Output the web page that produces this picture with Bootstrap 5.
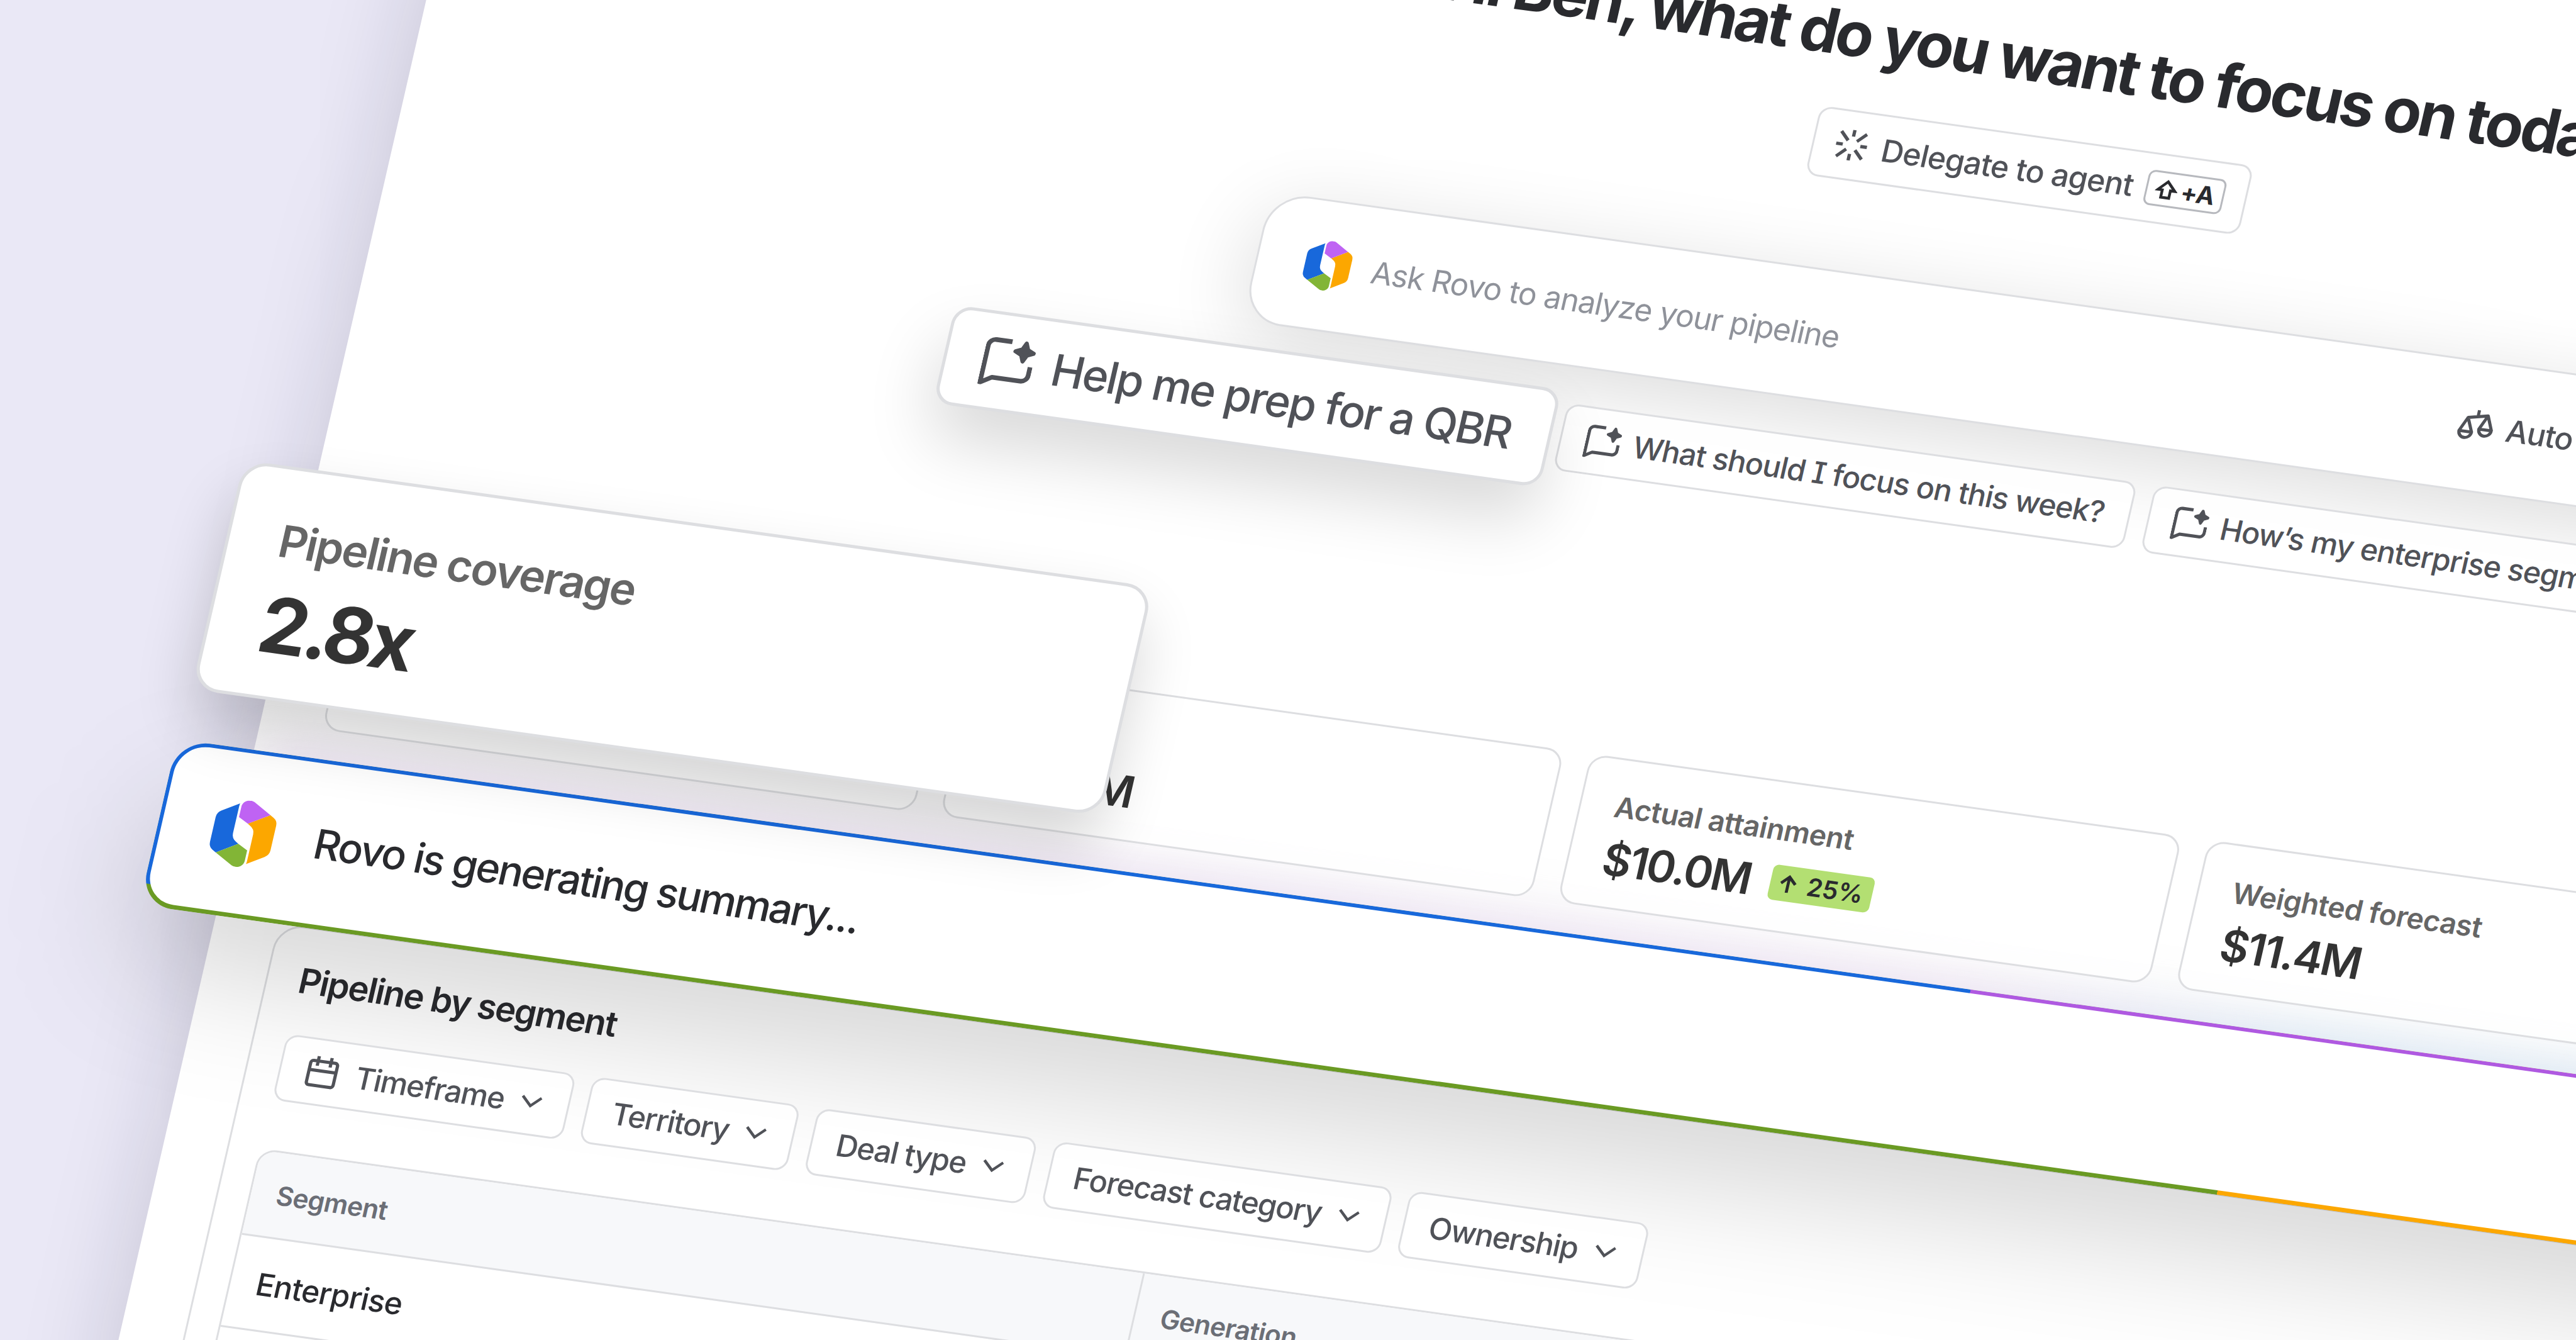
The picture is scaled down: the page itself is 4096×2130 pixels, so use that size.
<!DOCTYPE html>
<html lang="en">

<head>
  <meta charset="UTF-8" />
  <title>Pipeline overview</title>
  <meta name="viewport" content="width=device-width, initial-scale=1" />
  <link href="https://cdn.jsdelivr.net/npm/bootstrap@5.3.0/dist/css/bootstrap.min.css" rel="stylesheet" />
  <style>
    body {
      font-family: Inter, "Liberation Sans", sans-serif;
      font-feature-settings: "cv08";
      line-height: normal;
      color: #292a2e;
      background-color: #eae8f6;
      white-space: nowrap;
    }

    .stage {
      width: 4096px;
      height: 2130px;
      background-color: #eae8f6;
    }

    /* everything inside lives on one tilted sheet */
    .scene {
      display: flow-root;
      width: 6000px;
      height: 3000px;
      transform-origin: 0 0;
      transform: matrix(.9904, .1382, -.2239, .9746, 0, 0);
    }

    .sheet {
      width: 5110px;
      height: 3100px;
      margin: -700px 0 0 663px;
      padding: 284px 100px 0;
      background-color: #fff;
      box-shadow: 0 0 150px rgba(20, 15, 50, .17);
    }

    .greeting {
      font-size: 98.6px;
      font-weight: 650;
      line-height: 120px;
      letter-spacing: -.0422em;
      margin: 0 0 61px;
      padding-right: 12px;
    }

    /* outlined pills */
    .pill {
      display: flex;
      align-items: center;
      flex: none;
      position: relative;
      z-index: 2;
      border: 3.5px solid #dddee1;
      border-radius: 20px;
      background-color: rgba(255, 255, 255, .86);
      color: #505258;
      font-weight: 500;
    }

    .pill-delegate {
      height: 113px;
      padding: 0 33px 0 31px;
      gap: 20.5px;
      font-size: 49.5px;
      letter-spacing: -.82px;
    }

    .shortcut {
      height: 56.5px;
      width: 125px;
      border: 3.5px solid #b7b9be;
      border-radius: 11px;
      gap: 5px;
      font-size: 39.5px;
      font-weight: 700;
      letter-spacing: -.6px;
      color: #292a2e;
    }

    .pill-prompt {
      height: 109px;
      padding: 0 39px 0 38px;
      gap: 21px;
      font-size: 48px;
      letter-spacing: -1.04px;
    }

    .pill-hero {
      height: 160px;
      top: 6px;
      padding: 0 59px 0 57.5px;
      margin: -26px -13.5px -26px -2px;
      gap: 31px;
      border-width: 5px;
      border-radius: 30px;
      background-color: #fff;
      font-size: 70.4px;
      letter-spacing: -2.33px;
      z-index: 3;
      box-shadow: 0 55px 105px rgba(0, 0, 0, .15);
    }

    .pill-filter {
      height: 108px;
      padding: 0 41px 0 38.5px;
      gap: 26px;
      font-size: 48.5px;
      letter-spacing: -1.4px;
    }

    .ask-box {
      width: 2344px;
      height: 211.5px;
      margin-top: 143.5px;
      padding-left: 70.5px;
      gap: 31px;
      border: 3.5px solid #dddee1;
      border-radius: 63px;
      background-color: #fff;
      font-size: 49.3px;
      letter-spacing: -1.01px;
      color: #8f929a;
      position: relative;
      z-index: 1;
      box-shadow: 0 30px 130px rgba(0, 0, 0, .14);
    }

    .model-pick {
      width: 411.5px;
      gap: 21px;
      color: #505258;
      font-weight: 500;
    }

    .prompt-row {
      margin-top: 57.5px;
      padding-left: 833.5px;
      gap: 28px;
    }

    .metric-row {
      margin: 440.5px 0 0 -2px;
      gap: 42px;
    }

    .metric {
      flex: none;
      width: 949.5px;
      height: 242px;
      padding: 44.8px 0 0 53.6px;
      border: 3.5px solid #dddee1;
      border-radius: 28px;
      background-color: rgba(255, 255, 255, .75);
      position: relative;
      z-index: 2;
    }

    .metric-label {
      font-size: 46px;
      font-weight: 600;
      line-height: 60px;
      letter-spacing: -.5px;
      color: #666;
    }

    .metric-value {
      margin-top: 12px;
      font-size: 70.4px;
      font-weight: 600;
      line-height: 86px;
      letter-spacing: -2.6px;
      color: #333;
    }

    .delta {
      width: 163px;
      height: 57px;
      margin-left: 32px;
      gap: 16px;
      border-radius: 9px;
      background-color: #b3df72;
      color: #292a2e;
      font-size: 40px;
      letter-spacing: -.2px;
    }

    .coverage {
      position: absolute;
      left: -119px;
      top: 1373px;
      z-index: 5;
      width: 1459.5px;
      height: 374px;
      padding: 72px 0 0 79px;
      border: 5px solid #dddee1;
      border-radius: 42px;
      background-color: #fff;
      box-shadow: 0 50px 95px rgba(0, 0, 0, .165);
    }

    .coverage .metric-label {
      font-size: 70.7px;
      line-height: 86px;
      letter-spacing: -2.25px;
    }

    .coverage .metric-value {
      margin-top: 16px;
      font-size: 124px;
      font-weight: 700;
      line-height: 150px;
      letter-spacing: -6.6px;
    }

    /* summary bar with the four colour outline */
    .summary {
      position: absolute;
      left: -123.2px;
      top: 1828.5px;
      z-index: 1;
      width: 5356px;
      height: 270px;
    }

    .summary-shade {
      position: absolute;
      left: 0;
      top: 90px;
      width: 5000px;
      height: 100%;
      border-radius: 56px;
      background-color: rgba(0, 0, 0, .16);
      filter: blur(100px);
    }

    .summary-glow {
      position: absolute;
      left: 150px;
      right: 0;
      top: -8px;
      height: 150px;
      background: linear-gradient(90deg, #ebe0f2 0, #ebe0f2 2700px, #d8e6f4 3250px);
      filter: blur(38px);
    }

    .summary-frame {
      position: relative;
      height: 100%;
      padding: 6.3px;
      border-radius: 53px;
      background:
        linear-gradient(90deg, #1868db 2879px, #af59e1 2879px) 0 0 / 100% 235px no-repeat,
        linear-gradient(90deg, #6a9a23 3335px, #fca700 3335px);
    }

    .summary-body {
      height: 100%;
      padding-left: 75.5px;
      gap: 61px;
      border-radius: 47px;
      background-color: #fff;
      font-size: 65.5px;
      font-weight: 500;
      letter-spacing: -2.53px;
    }

    .segment-panel {
      height: 1200px;
      margin-top: 315px;
      padding: 49px 49.5px 0;
      border: 3.5px solid #dddee1;
      border-radius: 42px;
    }

    .panel-title {
      margin: 0 0 53px;
      font-size: 55.5px;
      font-weight: 600;
      line-height: 68px;
      letter-spacing: -1.73px;
    }

    .filter-row {
      gap: 27.5px;
    }

    .seg-table {
      display: grid;
      grid-template-columns: 1416px 1fr;
      margin: 79px 0 0 -2px;
      border: 3.5px solid #dddee1;
      border-radius: 28px;
      overflow: hidden;
      position: relative;
      z-index: 2;
      background-color: #fff;
    }

    .seg-table > div {
      display: flex;
      align-items: center;
      height: 150px;
      padding-left: 41px;
      border-bottom: 3.5px solid #dddee1;
      font-size: 49.3px;
      font-weight: 500;
      letter-spacing: -.82px;
    }

    .seg-table > .seg-head {
      height: 138px;
      background-color: #f7f8fa;
      color: #6b6e76;
      font-size: 42.2px;
      font-weight: 600;
      letter-spacing: -.7px;
    }

    .seg-table > .seg-split {
      padding-left: 41px;
      border-left: 3.5px solid #dddee1;
    }

    .ico {
      flex: none;
      fill: none;
      stroke: currentColor;
      stroke-width: 1.5;
    }
  </style>
</head>

<body>
  <svg width="0" height="0" class="position-absolute">
    <symbol id="rovo" viewBox="40.6 10.1 108 108">
      <path fill="#1868db" stroke="none" d="M79.3 16.8 52.9 32.1Q46 36.1 46 43.8V84.2Q46 92 52.8 96.1L58.7 99.6 90.8 81 86.7 78.5Q78.7 74 78.7 65.3V22.1Q78.7 19 79.3 16.8Z" />
      <path fill="#82b536" stroke="none" d="M58.7 99.6 88 116.6C96.5 121 106.9 115.5 106.9 106.6V89.6L90.8 81Z" />
      <path fill="#fca700" stroke="none" d="M109.9 111.4 136.3 96.1Q143.2 92.1 143.2 84.4V44Q143.2 36.2 136.4 32.1L130.5 28.6 98.4 47.2 102.5 49.7Q110.5 54.2 110.5 62.9V106.1Q110.5 109.2 109.9 111.4Z" />
      <path fill="#bf63f3" stroke="none" d="M130.5 28.6 101.2 11.6C92.7 7.2 82.3 12.7 82.3 21.6V38.6L98.4 47.2Z" />
    </symbol>
    <symbol id="chat" viewBox="0 0 16 16">
      <path stroke-linejoin="round" d="M8 1.15H2.9A2.15 2.15 0 0 0 .75 3.3V15.25L4.1 13.2H13.1A2.15 2.15 0 0 0 15.25 11.05V8.4" />
      <path fill="currentColor" stroke-width="1.3" stroke-linejoin="round" d="M12.5 1.1 13.4 3.1 15.4 4 13.4 4.9 12.5 6.9 11.6 4.9 9.6 4 11.6 3.1Z" />
    </symbol>
    <symbol id="down" viewBox="0 0 34 20">
      <path stroke-width="4.4" d="M2 2.2 17 16.6 32 2.2" />
    </symbol>
  </svg>

  <div class="stage position-relative overflow-hidden">
    <div class="scene">
      <div class="sheet position-relative">
        <h1 class="greeting text-center">Hi Ben, what do you want to focus on today?</h1>

        <div class="d-flex justify-content-center">
          <div class="pill pill-delegate">
            <svg class="ico" width="56.3" height="56.3" viewBox="0 0 16 16">
              <path d="M8 1v3M8 12v3M1 8h3M12 8h3M2.2 2.2 6 6M10 10l3.8 3.8M13.8 2.2 10 6M6 10l-3.8 3.8" />
            </svg>
            <span>Delegate to agent</span>
            <span class="shortcut d-flex align-items-center justify-content-center">
              <svg class="ico" width="36" height="32" viewBox="0 0 36 32">
                <path stroke-width="4.4" d="M18 3 31.5 17H24.5V29H11.5V17H4.5Z" />
              </svg>
              <span>+A</span>
            </span>
          </div>
        </div>

        <div class="ask-box d-flex align-items-center mx-auto">
          <svg class="ico" width="80.5" height="80.5"><use href="#rovo" /></svg>
          <span>Ask Rovo to analyze your pipeline</span>
          <div class="model-pick d-flex align-items-center ms-auto">
            <svg class="ico" width="56.3" height="56.3" viewBox="0 0 16 16">
              <path stroke-width="1.4" stroke-linejoin="round" d="M7.9.7V3.7M6.55 11 3.6 4.6 12.3 2.7 15.2 9.2M3.6 4.6.85 11H6.55A2.85 2.85 0 0 1 .85 11M12.3 2.7 9.5 9.2H15.2A2.85 2.85 0 0 1 9.5 9.2" />
            </svg>
            <span>Auto</span>
          </div>
        </div>

        <div class="prompt-row d-flex align-items-center">
          <div class="pill pill-prompt pill-hero">
            <svg class="ico" width="80.5" height="80.5"><use href="#chat" /></svg>
            <span>Help me prep for a QBR</span>
          </div>
          <div class="pill pill-prompt">
            <svg class="ico" width="55" height="55"><use href="#chat" /></svg>
            <span>What should I focus on this week?</span>
          </div>
          <div class="pill pill-prompt">
            <svg class="ico" width="55" height="55"><use href="#chat" /></svg>
            <span>How’s my enterprise segment doing?</span>
          </div>
        </div>

        <div class="metric-row d-flex">
          <div class="metric"></div>
          <div class="metric">
            <div class="metric-value mt-0 pt-5">
              <div class="pt-4">$10.0M</div>
            </div>
          </div>
          <div class="metric">
            <div class="metric-label">Actual attainment</div>
            <div class="metric-value d-flex align-items-center">
              <span>$10.0M</span>
              <span class="delta d-flex align-items-center justify-content-center">
                <svg class="ico" width="29" height="29" viewBox="0 0 28 28">
                  <path stroke-width="4.6" d="M14 28V4M3 14 14 3.2 25 14" />
                </svg>
                <span>25%</span>
              </span>
            </div>
          </div>
          <div class="metric">
            <div class="metric-label">Weighted forecast</div>
            <div class="metric-value">$11.4M</div>
          </div>
          <div class="metric"></div>
        </div>

        <div class="segment-panel">
          <h2 class="panel-title">Pipeline by segment</h2>
          <div class="filter-row d-flex">
            <div class="pill pill-filter">
              <svg class="ico" width="55" height="55" viewBox="0 0 16 16">
                <path stroke-linejoin="round" d="M3 2.75H13A1.25 1.25 0 0 1 14.25 4V13A1.25 1.25 0 0 1 13 14.25H3A1.25 1.25 0 0 1 1.75 13V4A1.25 1.25 0 0 1 3 2.75ZM1.75 7.2H14.25M5 .5V5M11 .5V5" />
              </svg>
              <span>Timeframe</span>
              <svg class="ico" width="34" height="20"><use href="#down" /></svg>
            </div>
            <div class="pill pill-filter">
              <span>Territory</span>
              <svg class="ico" width="34" height="20"><use href="#down" /></svg>
            </div>
            <div class="pill pill-filter">
              <span>Deal type</span>
              <svg class="ico" width="34" height="20"><use href="#down" /></svg>
            </div>
            <div class="pill pill-filter">
              <span>Forecast category</span>
              <svg class="ico" width="34" height="20"><use href="#down" /></svg>
            </div>
            <div class="pill pill-filter">
              <span>Ownership</span>
              <svg class="ico" width="34" height="20"><use href="#down" /></svg>
            </div>
          </div>

          <div class="seg-table">
            <div class="seg-head">Segment</div>
            <div class="seg-head seg-split">Generation</div>
            <div>Enterprise</div>
            <div class="seg-split"></div>
            <div></div>
            <div class="seg-split"></div>
          </div>
        </div>

        <div class="summary">
          <div class="summary-shade"></div>
          <div class="summary-glow"></div>
          <div class="summary-frame">
            <div class="summary-body d-flex align-items-center">
              <svg class="ico" width="108" height="108"><use href="#rovo" /></svg>
              <span>Rovo is generating summary...</span>
            </div>
          </div>
        </div>

        <div class="coverage">
          <div class="metric-label">Pipeline coverage</div>
          <div class="metric-value">2.8x</div>
        </div>
      </div>
    </div>
  </div>
  <script src="https://cdn.jsdelivr.net/npm/bootstrap@5.3.0/dist/js/bootstrap.bundle.min.js"></script>
</body>

</html>
